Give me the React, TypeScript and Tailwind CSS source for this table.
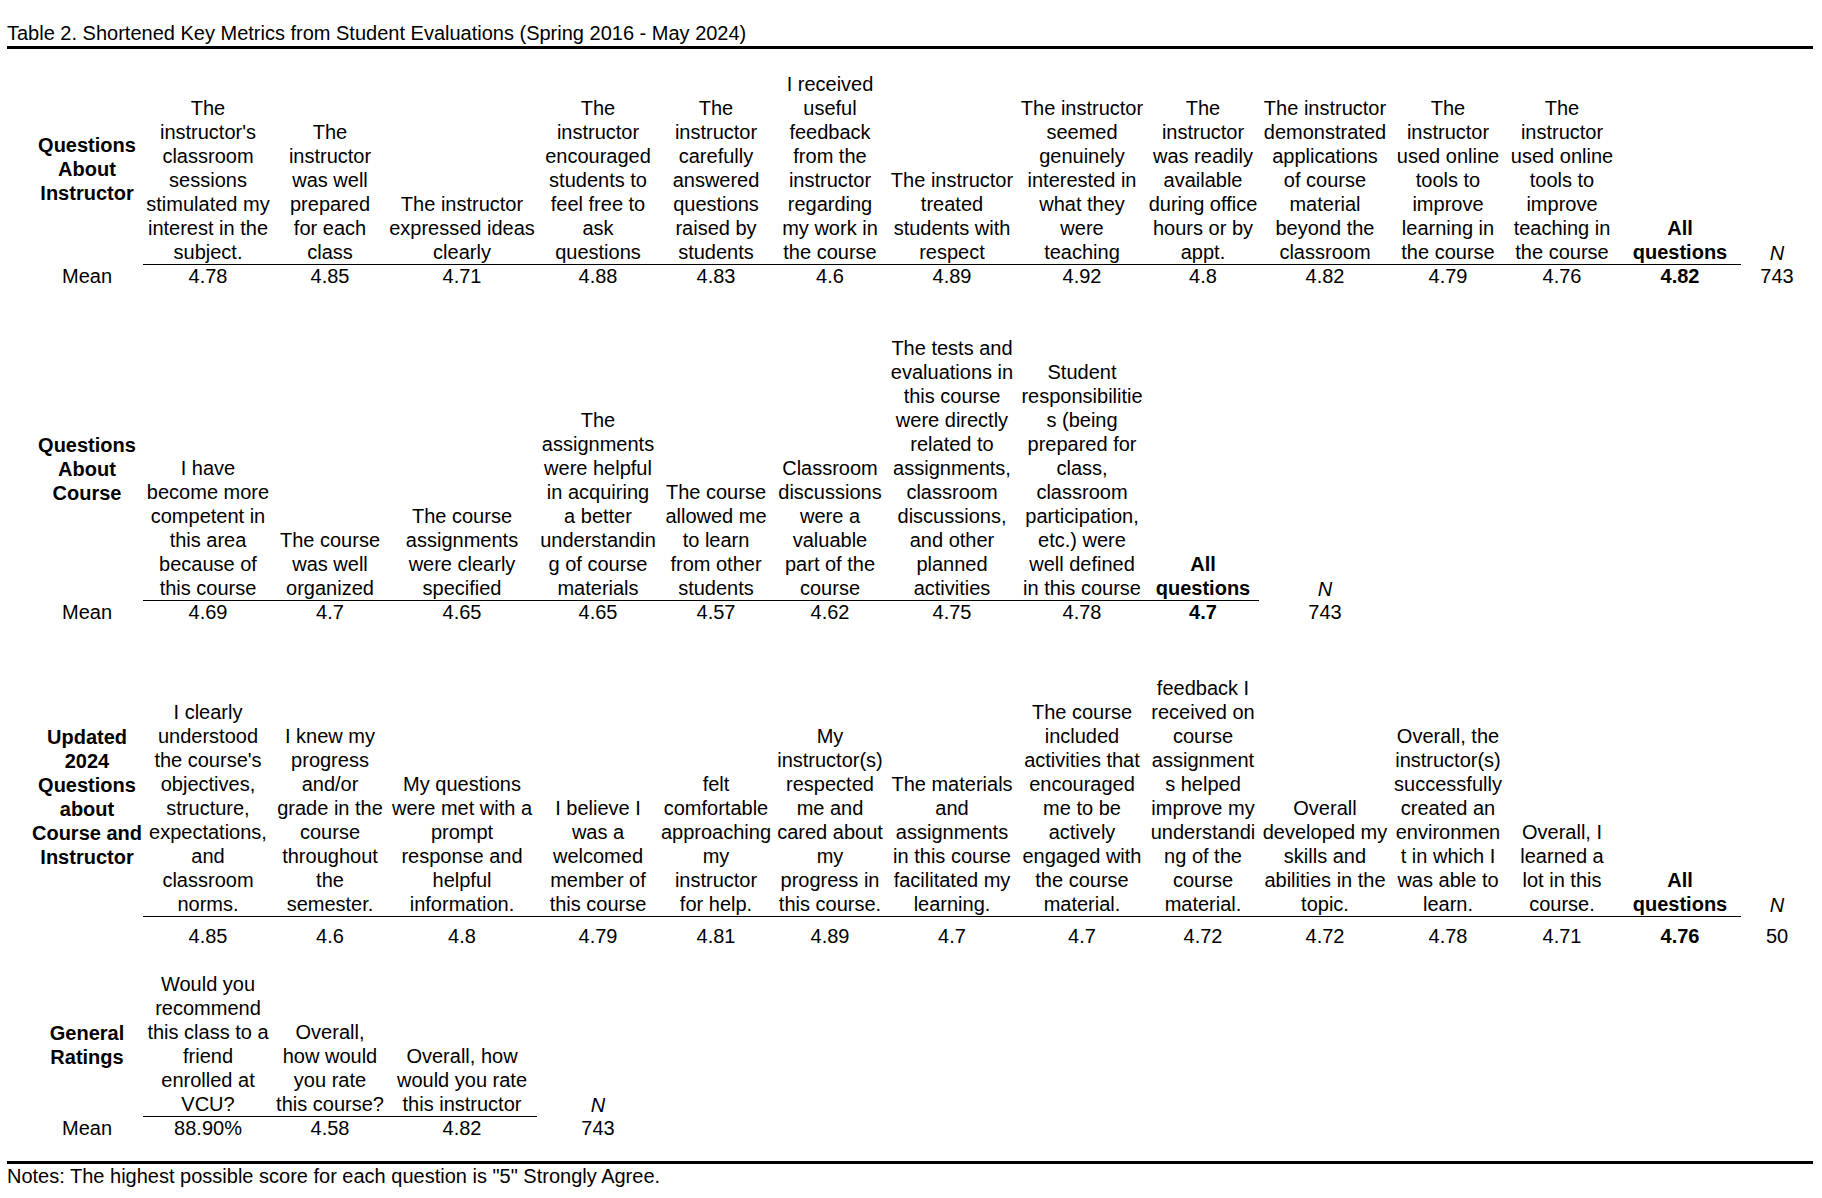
const COLS =
  'grid grid-cols-[112px_130px_114px_150px_122px_114px_114px_130px_130px_112px_132px_114px_114px_122px_72px]';

type Item = { lines: string[]; value: string };

interface SectionProps {
  label: string[];
  items: Item[];
  all: string;
  n: string;
  showMean?: boolean;
  headerClass: string;
  meanClass: string;
  className?: string;
}

const instructorItems: Item[] = [
  { lines: ['The', "instructor's", 'classroom', 'sessions', 'stimulated my', 'interest in the', 'subject.'], value: '4.78' },
  { lines: ['The', 'instructor', 'was well', 'prepared', 'for each', 'class'], value: '4.85' },
  { lines: ['The instructor', 'expressed ideas', 'clearly'], value: '4.71' },
  { lines: ['The', 'instructor', 'encouraged', 'students to', 'feel free to', 'ask', 'questions'], value: '4.88' },
  { lines: ['The', 'instructor', 'carefully', 'answered', 'questions', 'raised by', 'students'], value: '4.83' },
  { lines: ['I received', 'useful', 'feedback', 'from the', 'instructor', 'regarding', 'my work in', 'the course'], value: '4.6' },
  { lines: ['The instructor', 'treated', 'students with', 'respect'], value: '4.89' },
  { lines: ['The instructor', 'seemed', 'genuinely', 'interested in', 'what they', 'were', 'teaching'], value: '4.92' },
  { lines: ['The', 'instructor', 'was readily', 'available', 'during office', 'hours or by', 'appt.'], value: '4.8' },
  { lines: ['The instructor', 'demonstrated', 'applications', 'of course', 'material', 'beyond the', 'classroom'], value: '4.82' },
  { lines: ['The', 'instructor', 'used online', 'tools to', 'improve', 'learning in', 'the course'], value: '4.79' },
  { lines: ['The', 'instructor', 'used online', 'tools to', 'improve', 'teaching in', 'the course'], value: '4.76' },
];

const courseItems: Item[] = [
  { lines: ['I have', 'become more', 'competent in', 'this area', 'because of', 'this course'], value: '4.69' },
  { lines: ['The course', 'was well', 'organized'], value: '4.7' },
  { lines: ['The course', 'assignments', 'were clearly', 'specified'], value: '4.65' },
  { lines: ['The', 'assignments', 'were helpful', 'in acquiring', 'a better', 'understandin', 'g of course', 'materials'], value: '4.65' },
  { lines: ['The course', 'allowed me', 'to learn', 'from other', 'students'], value: '4.57' },
  { lines: ['Classroom', 'discussions', 'were a', 'valuable', 'part of the', 'course'], value: '4.62' },
  {
    lines: ['The tests and', 'evaluations in', 'this course', 'were directly', 'related to', 'assignments,', 'classroom', 'discussions,', 'and other', 'planned', 'activities'],
    value: '4.75',
  },
  {
    lines: ['Student', 'responsibilitie', 's (being', 'prepared for', 'class,', 'classroom', 'participation,', 'etc.) were', 'well defined', 'in this course'],
    value: '4.78',
  },
];

const updatedItems: Item[] = [
  { lines: ['I clearly', 'understood', "the course's", 'objectives,', 'structure,', 'expectations,', 'and', 'classroom', 'norms.'], value: '4.85' },
  { lines: ['I knew my', 'progress', 'and/or', 'grade in the', 'course', 'throughout', 'the', 'semester.'], value: '4.6' },
  { lines: ['My questions', 'were met with a', 'prompt', 'response and', 'helpful', 'information.'], value: '4.8' },
  { lines: ['I believe I', 'was a', 'welcomed', 'member of', 'this course'], value: '4.79' },
  { lines: ['felt', 'comfortable', 'approaching', 'my', 'instructor', 'for help.'], value: '4.81' },
  { lines: ['My', 'instructor(s)', 'respected', 'me and', 'cared about', 'my', 'progress in', 'this course.'], value: '4.89' },
  { lines: ['The materials', 'and', 'assignments', 'in this course', 'facilitated my', 'learning.'], value: '4.7' },
  { lines: ['The course', 'included', 'activities that', 'encouraged', 'me to be', 'actively', 'engaged with', 'the course', 'material.'], value: '4.7' },
  {
    lines: ['feedback I', 'received on', 'course', 'assignment', 's helped', 'improve my', 'understandi', 'ng of the', 'course', 'material.'],
    value: '4.72',
  },
  { lines: ['Overall', 'developed my', 'skills and', 'abilities in the', 'topic.'], value: '4.72' },
  { lines: ['Overall, the', 'instructor(s)', 'successfully', 'created an', 'environmen', 't in which I', 'was able to', 'learn.'], value: '4.78' },
  { lines: ['Overall, I', 'learned a', 'lot in this', 'course.'], value: '4.71' },
];

const generalItems: Item[] = [
  { lines: ['Would you', 'recommend', 'this class to a', 'friend', 'enrolled at', 'VCU?'], value: '88.90%' },
  { lines: ['Overall,', 'how would', 'you rate', 'this course?'], value: '4.58' },
  { lines: ['Overall, how', 'would you rate', 'this instructor'], value: '4.82' },
];

function Section({ label, items, all, n, showMean = true, headerClass, meanClass, className }: SectionProps) {
  return (
    <div className={className}>
      {/* header row: questions, bottom aligned and underlined */}
      <div className={`${COLS} ${headerClass}`}>
        <div className="flex flex-col items-center justify-center text-center font-bold">
          {label.map((l) => (
            <div key={l} className="whitespace-nowrap">{l}</div>
          ))}
        </div>
        {items.map((item, i) => (
          <div key={i} className="flex flex-col items-center justify-end text-center border-b border-black">
            {item.lines.map((l, j) => (
              <div key={j} className="whitespace-nowrap">{l}</div>
            ))}
          </div>
        ))}
        {all && (
          <div className="flex flex-col items-center justify-end text-center font-bold border-b border-black">
            <div>All</div>
            <div>questions</div>
          </div>
        )}
        <div className="flex flex-col items-center justify-end italic">N</div>
      </div>

      {/* mean row */}
      <div className={`${COLS} ${meanClass}`}>
        <div className="text-center">{showMean ? 'Mean' : ''}</div>
        {items.map((item, i) => (
          <div key={i} className="text-center">{item.value}</div>
        ))}
        {all && <div className="text-center font-bold">{all}</div>}
        <div className="text-center">{n}</div>
      </div>
    </div>
  );
}

export default function App() {
  return (
    <div
      className="w-[1822px] h-[1198px] bg-white text-black text-[20px] leading-[24px] overflow-hidden"
      style={{ fontFamily: '"Liberation Sans", Arial, sans-serif' }}
    >
      <div className="ml-[7px] w-[1806px] pt-[22px] pb-[2px] border-b-[3px] border-black">
        <div className="leading-[22px] whitespace-nowrap">
          Table 2. Shortened Key Metrics from Student Evaluations (Spring 2016 - May 2024)
        </div>
      </div>

      <div className="ml-[31px]">
        <Section
          className="mt-[23px]"
          label={['Questions', 'About', 'Instructor']}
          items={instructorItems}
          all="4.82"
          n="743"
          headerClass="h-[192px]"
          meanClass="h-[24px]"
        />
        <Section
          className="mt-[48px]"
          label={['Questions', 'About', 'Course']}
          items={courseItems}
          all="4.7"
          n="743"
          headerClass="h-[264px]"
          meanClass="h-[24px]"
        />
        <Section
          className="mt-[52px]"
          label={['Updated', '2024', 'Questions', 'about', 'Course and', 'Instructor']}
          items={updatedItems}
          all="4.76"
          n="50"
          showMean={false}
          headerClass="h-[240px]"
          meanClass="h-[40px] pt-[8px]"
        />
        <Section
          className="mt-[16px]"
          label={['General', 'Ratings']}
          items={generalItems}
          all=""
          n="743"
          headerClass="h-[144px]"
          meanClass="h-[24px]"
        />
      </div>

      <div className="ml-[7px] w-[1806px] mt-[21px] border-t-[3px] border-black">
        <div className="whitespace-nowrap">Notes: The highest possible score for each question is "5" Strongly Agree.</div>
      </div>
    </div>
  );
}
